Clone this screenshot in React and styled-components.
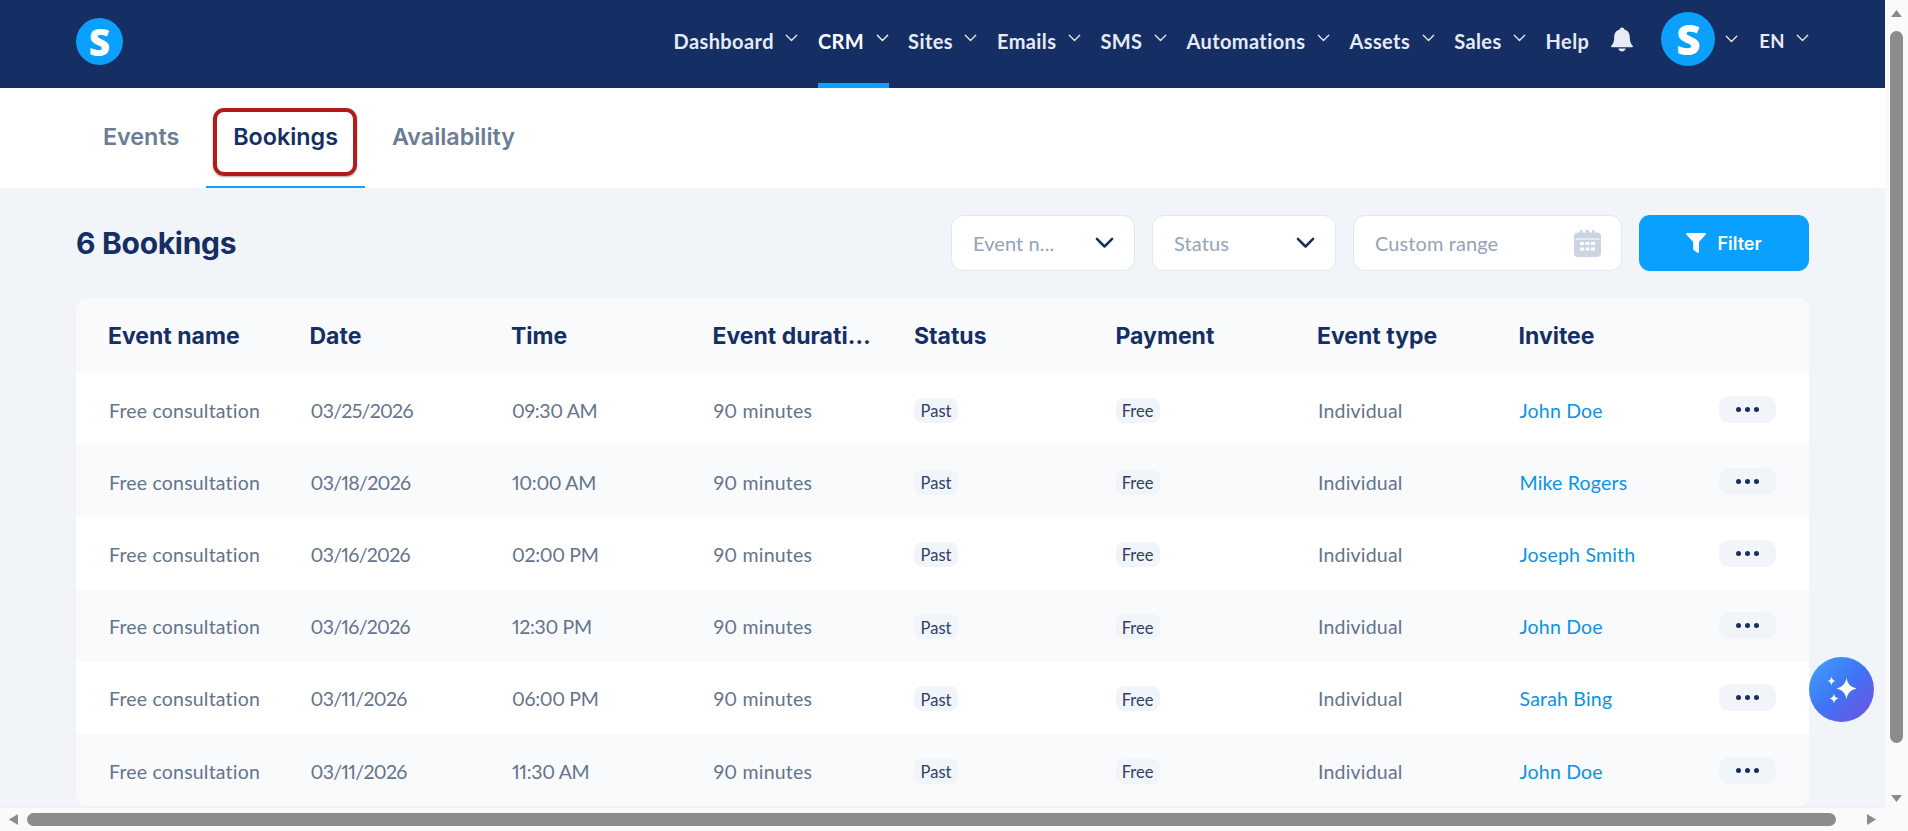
import React from 'react'
import styled, { createGlobalStyle } from 'styled-components'

const NAV = [
  { label: 'Dashboard', menu: true },
  { label: 'CRM', menu: true, active: true },
  { label: 'Sites', menu: true },
  { label: 'Emails', menu: true },
  { label: 'SMS', menu: true },
  { label: 'Automations', menu: true },
  { label: 'Assets', menu: true },
  { label: 'Sales', menu: true },
  { label: 'Help' },
]

const COLUMNS = ['Event name', 'Date', 'Time', 'Event duration', 'Status', 'Payment', 'Event type', 'Invitee']

const BOOKINGS = [
  { date: '03/25/2026', time: '09:30 AM', invitee: 'John Doe' },
  { date: '03/18/2026', time: '10:00 AM', invitee: 'Mike Rogers' },
  { date: '03/16/2026', time: '02:00 PM', invitee: 'Joseph Smith' },
  { date: '03/16/2026', time: '12:30 PM', invitee: 'John Doe' },
  { date: '03/11/2026', time: '06:00 PM', invitee: 'Sarah Bing' },
  { date: '03/11/2026', time: '11:30 AM', invitee: 'John Doe' },
]

const Chevron = ({ size = 13, weight = 1.3 }) => (
  <svg width={size} height={size * 0.6} viewBox="0 0 20 12" fill="none" stroke="currentColor" strokeWidth={weight * 20 / size} strokeLinecap="round" strokeLinejoin="round">
    <path d="M2 2l8 8 8-8" />
  </svg>
)

function App() {
  return (
    <Shell>
      <GlobalStyle />
      <Viewport>
        <Header>
          <HeaderLogo $size={47} $font={37}>S</HeaderLogo>
          <Nav>
            {NAV.map((item) => (
              <NavItem key={item.label} $active={item.active}>
                {item.label}
                {item.menu && <NavChevron><Chevron /></NavChevron>}
              </NavItem>
            ))}
            <BellButton>
              <svg width="24" height="25" viewBox="0 0 24 25" fill="currentColor">
                <path d="M12 0.5c1.3 0 2.2.9 2.3 2.1 3.6.9 5.500 3.800 5.500 7.600 0 3.600.6 6.400 2.900 8.600.5.5.2 1.400-.6 1.400H1.900c-.8 0-1.100-.9-.6-1.400 2.300-2.200 2.900-5 2.900-8.600 0-3.800 1.900-6.700 5.500-7.600.1-1.200 1-2.100 2.300-2.100z" />
                <path d="M8.400 21.600h7.200c-.2 1.700-1.700 2.900-3.600 2.900s-3.400-1.200-3.600-2.900z" />
              </svg>
            </BellButton>
            <Account>
              <LogoMark $size={54} $font={42}>S</LogoMark>
              <Chevron />
            </Account>
            <LanguageItem>
              EN
              <NavChevron><Chevron /></NavChevron>
            </LanguageItem>
          </Nav>
        </Header>

        <Tabs>
          <Tab>Events</Tab>
          <Tab $active>
            Bookings
            <Highlight />
          </Tab>
          <Tab>Availability</Tab>
        </Tabs>

        <Content>
          <TitleRow>
            <Title>6 Bookings</Title>
            <Filters>
              <Select>
                <Placeholder>Event n...</Placeholder>
                <SelectArrow><Chevron size={19} weight={2.5} /></SelectArrow>
              </Select>
              <Select>
                <Placeholder>Status</Placeholder>
                <SelectArrow><Chevron size={19} weight={2.5} /></SelectArrow>
              </Select>
              <DateRange>
                <Placeholder>Custom range</Placeholder>
                <svg width="27" height="27" viewBox="0 0 27 27" fill="#cbd5e1">
                  <path fillRule="evenodd" d="M6 0h2.500v2.500h3V0H15v2.500h3V0h2.500v2.500H23a4 4 0 0 1 4 4V23a4 4 0 0 1-4 4H4a4 4 0 0 1-4-4V6.500a4 4 0 0 1 4-4h2V0zM1.500 8.500v1h24v-1h-24zM6 12v3h4v-3H6zm5.500 0v3h4v-3h-4zm5.500 0v3h4v-3h-4zM6 17.500v3h4v-3H6zm5.500 0v3h4v-3h-4zm5.500 0v3h4v-3h-4z" />
                </svg>
              </DateRange>
              <FilterButton>
                <svg width="20" height="20" viewBox="0 0 20 20" fill="currentColor">
                  <path d="M1 0h18c.8 0 1.200.9.7 1.500L13 9v9.800c0 .8-.9 1.400-1.600.9L8 17.300a1.200 1.200 0 0 1-.8-1.100V9L.3 1.500C-.2.900.2 0 1 0z" />
                </svg>
                Filter
              </FilterButton>
            </Filters>
          </TitleRow>

          <Table>
            <HeadRow>
              {COLUMNS.map((name) => (
                <HeadCell key={name}>{name}</HeadCell>
              ))}
            </HeadRow>
            {BOOKINGS.map((row, i) => (
              <Row key={i} $striped={i % 2 === 1}>
                <Cell>Free consultation</Cell>
                <DateCell>{row.date}</DateCell>
                <TimeCell>{row.time}</TimeCell>
                <Cell>90 minutes</Cell>
                <Cell><Badge>Past</Badge></Cell>
                <Cell><Badge>Free</Badge></Cell>
                <Cell>Individual</Cell>
                <InviteeLink>{row.invitee}</InviteeLink>
                <MoreButton><Dot /><Dot /><Dot /></MoreButton>
              </Row>
            ))}
          </Table>

          <AssistantButton>
            <svg width="31" height="30" viewBox="0 0 31 30" fill="#fff">
              <path d="M20.500 2.500C21.300 8.500 24.500 12 30.500 13.500C24.500 15 21.300 18.500 20.500 24.500C19.700 18.500 16.500 15 10.500 13.500C16.500 12 19.700 8.500 20.500 2.500Z" />
              <path d="M5.500 1.500C5.900 4 6.900 5.400 9.500 6C6.900 6.600 5.900 8 5.500 10.500C5.100 8 4.100 6.600 1.500 6C4.100 5.400 5.100 4 5.500 1.500Z" />
              <path d="M8 18.500C8.400 21.200 9.500 22.700 12.500 23.500C9.500 24.300 8.400 25.800 8 28.500C7.600 25.800 6.500 24.300 3.500 23.500C6.500 22.700 7.600 21.200 8 18.500Z" />
            </svg>
          </AssistantButton>
        </Content>
      </Viewport>

      <VerticalBar>
        <Arrow $dir="up" />
        <VerticalThumb />
        <Arrow $dir="down" />
      </VerticalBar>
      <HorizontalBar>
        <Arrow $dir="left" />
        <HorizontalThumb />
        <Arrow $dir="right" />
      </HorizontalBar>
      <Corner />
    </Shell>
  )
}

export default App

const GlobalStyle = createGlobalStyle`
html, body {
  margin: 0;
  height: 100%;
  overflow: hidden;
  background: #fff;
}
* {
  box-sizing: border-box;
}
`

const Shell = styled.div`
display: grid;
grid-template-columns: 1885px 23px;
grid-template-rows: 807px 24px;
width: 1908px;
height: 831px;
font-family: Lato, "Noto Sans", sans-serif;
font-variant-numeric: proportional-nums;
`

const Viewport = styled.div`
overflow: hidden;
display: flex;
flex-direction: column;
background: #f1f4f9;
`

const Header = styled.header`
height: 88px;
flex: none;
display: flex;
align-items: center;
justify-content: space-between;
padding: 0 76px;
background: #152e63;
`

const LogoMark = styled.div`
width: ${(p) => p.$size}px;
height: ${(p) => p.$size}px;
flex: none;
display: flex;
align-items: center;
justify-content: center;
border-radius: 50%;
background: #0ba0fb;
color: #fff;
font-family: "Open Sans", sans-serif;
font-weight: 800;
font-size: ${(p) => p.$font}px;
line-height: 1;
`

const HeaderLogo = styled(LogoMark)`
margin-bottom: 5px;
`

const Nav = styled.nav`
display: flex;
align-items: center;
gap: 19.5px;
height: 100%;
`

const NavItem = styled.div`
height: 100%;
display: flex;
align-items: center;
gap: 11.5px;
padding-bottom: 7px;
color: ${(p) => (p.$active ? '#fff' : '#e6eaf4')};
font-size: 20px;
font-weight: 700;
letter-spacing: 0.4px;
white-space: nowrap;
${(p) => p.$active && `box-shadow: inset 0 -5px 0 #0ba0fb;`}
`

const LanguageItem = styled(NavItem)`
margin-left: 1.5px;
font-size: 18.5px;
gap: 11px;
`

const NavChevron = styled.span`
display: flex;
margin-bottom: 5px;
`

const BellButton = styled.div`
display: flex;
margin: 0 0 10px 1.5px;
color: #e8ebf3;
`

const Account = styled.div`
display: flex;
align-items: center;
gap: 10px;
margin: 0 0 10px 7.5px;
color: #e6eaf4;
`

const Tabs = styled.div`
height: 100px;
flex: none;
display: flex;
padding-left: 76px;
background: #fff;
`

const Tab = styled.div`
position: relative;
display: flex;
align-items: center;
height: 100%;
padding: 0 27px 3px;
font-family: Inter, sans-serif;
font-size: 23.3px;
font-weight: 600;
color: ${(p) => (p.$active ? '#152e63' : '#6b7c93')};
${(p) => p.$active && `box-shadow: inset 0 -2px 0 #1a9cf0;`}
`

const Highlight = styled.span`
position: absolute;
left: 7px;
right: 8px;
top: 20px;
bottom: 12px;
border: 4px solid #b01c1c;
border-radius: 11px;
box-shadow: 0 1px 2px rgba(0, 0, 0, 0.35);
`

const Content = styled.main`
position: relative;
flex: 1;
padding: 0 76px;
`

const TitleRow = styled.div`
height: 110px;
display: flex;
align-items: center;
justify-content: space-between;
`

const Title = styled.h1`
margin: 0;
font-family: Inter, sans-serif;
font-size: 30px;
font-weight: 700;
color: #152e63;
letter-spacing: -0.3px;
`

const Filters = styled.div`
display: flex;
gap: 17px;
`

const Select = styled.div`
width: 184px;
height: 56px;
display: flex;
align-items: center;
justify-content: space-between;
padding: 0 20px 0 21px;
background: #fff;
border: 1px solid #e2e8f0;
border-radius: 12px;
`

const SelectArrow = styled.span`
display: flex;
color: #152e63;
`

const DateRange = styled(Select)`
width: 269px;
`

const Placeholder = styled.span`
font-size: 20px;
letter-spacing: 0.1px;
color: #94a3b8;
`

const FilterButton = styled.button`
width: 170px;
height: 56px;
display: flex;
align-items: center;
justify-content: center;
gap: 11px;
border: none;
border-radius: 11px;
background: #0aa0ff;
color: #fff;
font-family: Inter, sans-serif;
font-size: 18px;
font-weight: 600;
`

const Table = styled.div`
border-radius: 12px;
overflow: hidden;
background: #fff;
`

const HeadRow = styled.div`
height: 75px;
display: grid;
grid-template-columns: repeat(8, minmax(0, 1fr)) 57px;
align-items: center;
padding: 0 32px;
background: #f8fafc;
`

const HeadCell = styled.div`
padding-right: 42px;
overflow: hidden;
text-overflow: ellipsis;
white-space: nowrap;
font-family: Inter, sans-serif;
font-size: 23px;
font-weight: 700;
color: #152e63;
`

const Row = styled.div`
height: 72.2px;
display: grid;
grid-template-columns: repeat(8, minmax(0, 1fr)) 57px;
align-items: center;
padding: 0 32px;
background: ${(p) => (p.$striped ? '#f8fafc' : '#fff')};
`

const Cell = styled.div`
padding: 2px 0 0 1px;
font-size: 19.5px;
letter-spacing: 0.2px;
color: #64748b;
white-space: nowrap;
`

const DateCell = styled(Cell)`
letter-spacing: -0.7px;
`

const TimeCell = styled(Cell)`
letter-spacing: -0.35px;
`

const InviteeLink = styled(Cell)`
color: #0b93e6;
`

const Badge = styled.span`
display: inline-flex;
align-items: center;
justify-content: center;
width: 44px;
height: 25px;
margin-left: -1px;
padding-top: 2px;
border-radius: 8px;
background: #f1f4f9;
color: #2f4168;
font-size: 16.5px;
letter-spacing: 0;
`

const MoreButton = styled.div`
width: 57px;
height: 27px;
margin-left: -1px;
display: flex;
align-items: center;
justify-content: center;
gap: 4px;
border-radius: 10px;
background: #f1f4f9;
`

const Dot = styled.span`
width: 5px;
height: 5px;
border-radius: 50%;
background: #152e63;
`

const AssistantButton = styled.div`
position: absolute;
left: 1809px;
top: 469px;
width: 65px;
height: 65px;
display: flex;
align-items: center;
justify-content: center;
border-radius: 50%;
background: linear-gradient(135deg, #3fa4fb 0%, #3f73f5 50%, #7351e0 100%);
`

const VerticalBar = styled.div`
display: flex;
flex-direction: column;
align-items: center;
padding: 10px 0 5px;
background: #fafafa;
`

const VerticalThumb = styled.div`
width: 13px;
height: 712px;
margin: 14px 0 auto;
border-radius: 7px;
background: #8c8c8c;
`

const HorizontalBar = styled.div`
display: flex;
align-items: center;
padding: 0 9px;
background: #fafafa;
border-top: 1px solid #eceff3;
`

const HorizontalThumb = styled.div`
width: 1809px;
height: 13px;
margin: 0 auto 0 9px;
border-radius: 7px;
background: #8c8c8c;
`

const Corner = styled.div`
background: #fafafa;
`

const ARROW_SHAPES = {
  up: 'polygon(50% 0, 100% 100%, 0 100%)',
  down: 'polygon(0 0, 100% 0, 50% 100%)',
  left: 'polygon(100% 0, 100% 100%, 0 50%)',
  right: 'polygon(0 0, 100% 50%, 0 100%)',
}

const Arrow = styled.span`
flex: none;
width: ${(p) => (p.$dir === 'up' || p.$dir === 'down' ? 11 : 9)}px;
height: ${(p) => (p.$dir === 'up' || p.$dir === 'down' ? 7 : 11)}px;
background: #8c8c8c;
clip-path: ${(p) => ARROW_SHAPES[p.$dir]};
`
